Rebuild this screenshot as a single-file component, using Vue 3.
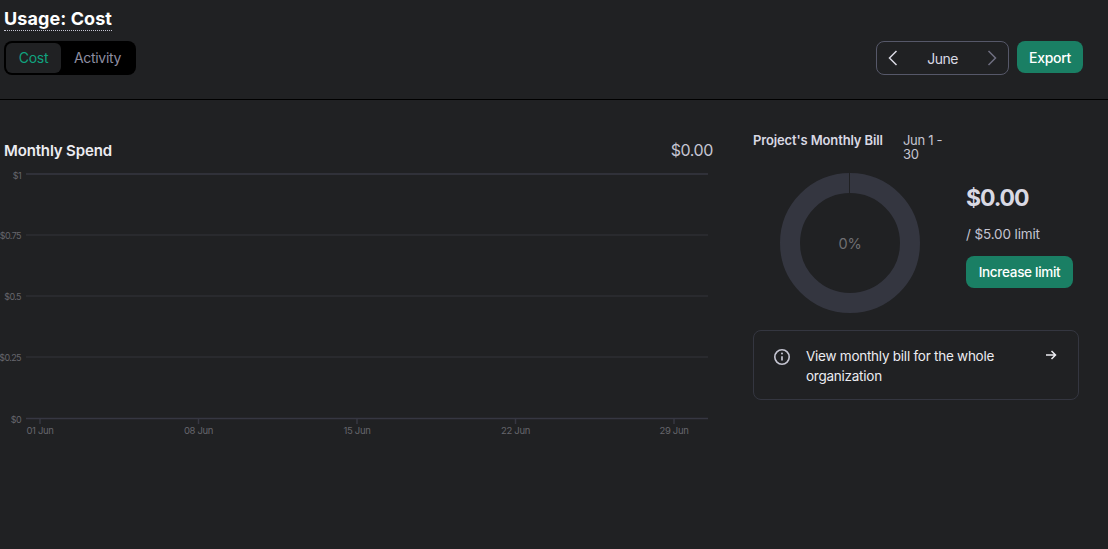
<script setup>
const grid = [
  { y: 174, ly: 179, label: '$1', cls: 'axis' },
  { y: 235, ly: 239, label: '$0.75', cls: 'mid' },
  { y: 296, ly: 300, label: '$0.5', cls: 'mid' },
  { y: 357, ly: 361, label: '$0.25', cls: 'mid' },
  { y: 418.5, ly: 423, label: '$0', cls: 'axis' },
]
const ticks = [
  { x: 40, label: '01 Jun' },
  { x: 198.5, label: '08 Jun' },
  { x: 357, label: '15 Jun' },
  { x: 515.5, label: '22 Jun' },
  { x: 674, label: '29 Jun' },
]
</script>

<template>
  <div class="page">
    <header class="top">
      <h1 class="title"><span class="title-text">Usage: Cost</span></h1>
      <div class="toolbar">
        <div class="tabs">
          <span class="tab active">Cost</span>
          <span class="tab">Activity</span>
        </div>
        <div class="actions">
          <div class="month">
            <svg class="chev prev" width="12" height="18" viewBox="0 0 12 18" fill="none"><path d="M9.5 2 2.5 9l7 7" /></svg>
            <span class="month-name">June</span>
            <svg class="chev next" width="12" height="18" viewBox="0 0 12 18" fill="none"><path d="M2.5 2l7 7-7 7" /></svg>
          </div>
          <button class="btn export">Export</button>
        </div>
      </div>
    </header>

    <main class="body">
      <section class="spend">
        <div class="spend-head">
          <span class="spend-title">Monthly Spend</span>
          <span class="spend-total">$0.00</span>
        </div>
        <svg class="chart" width="720" height="280" viewBox="0 160 720 280">
          <g v-for="g in grid" :key="g.label">
            <line x1="26" x2="708" :y1="g.y" :y2="g.y" :class="g.cls" />
            <text x="21" :y="g.ly" text-anchor="end" class="tick-text y-text">{{ g.label }}</text>
          </g>
          <g v-for="t in ticks" :key="t.label">
            <line :x1="t.x" :x2="t.x" y1="419" y2="424" class="axis" />
            <text :x="t.x" y="434" text-anchor="middle" class="tick-text">{{ t.label }}</text>
          </g>
        </svg>
      </section>

      <aside class="bill">
        <div class="bill-head">
          <span class="bill-title">Project's Monthly Bill</span>
          <span class="bill-range">Jun 1 -<br />30</span>
        </div>
        <div class="bill-main">
          <div class="donut">
            <svg width="140" height="140" viewBox="0 0 140 140">
              <circle cx="70" cy="70" r="60" fill="none" stroke="#343640" stroke-width="20" />
              <line x1="69.5" x2="69.5" y1="0" y2="20" stroke="#202123" stroke-width="1" />
            </svg>
            <span class="pct">0%</span>
          </div>
          <div class="stats">
            <div class="amount">$0.00</div>
            <div class="limit">/ $5.00 limit</div>
            <button class="btn increase">Increase limit</button>
          </div>
        </div>
        <div class="org-card">
          <svg class="info" width="18" height="18" viewBox="0 0 18 18" fill="none">
            <circle cx="9" cy="9" r="7.2" stroke="#c5c5d2" stroke-width="1.6" />
            <path d="M9 8.2v4.3" stroke="#c5c5d2" stroke-width="1.7" />
            <circle cx="9" cy="5.6" r="1" fill="#c5c5d2" />
          </svg>
          <span class="org-text">View monthly bill for the whole organization</span>
          <svg class="arrow" width="12" height="12" viewBox="0 0 12 12" fill="none">
            <path d="M1 6h9.5M6.5 2l4 4-4 4" stroke="#ececf1" stroke-width="1.5" />
          </svg>
        </div>
      </aside>
    </main>
  </div>
</template>

<style scoped>
.page {
  width: 1108px;
  height: 549px;
  overflow: hidden;
  background: #202123;
  color: #ececf1;
  font-family: Inter, "Liberation Sans", sans-serif;
}
.top {
  height: 92px;
  padding: 7px 25px 0 4px;
  border-bottom: 1px solid #000;
}
.title {
  margin: 0;
  height: 24px;
  font-size: 18px;
  line-height: 23px;
  font-weight: 700;
  letter-spacing: 0.08px;
  color: #fff;
}
.title-text {
  display: inline-block;
  height: 23px;
  border-bottom: 1px dotted #c5c5d2;
}
.toolbar {
  display: flex;
  justify-content: space-between;
  align-items: flex-start;
  margin-top: 10px;
}
.tabs {
  display: flex;
  width: 132px;
  height: 34px;
  padding: 2px;
  box-sizing: border-box;
  background: #000;
  border-radius: 8px;
}
.tab {
  display: flex;
  align-items: center;
  justify-content: center;
  padding-bottom: 2px;
  box-sizing: border-box;
  font-size: 14px;
  letter-spacing: -0.3px;
  color: #8e8ea0;
  border-radius: 6px;
}
.tab.active {
  flex: 0 0 55px;
  background: #202123;
  color: #10a37f;
}
.tab:last-child {
  flex: 0 0 73px;
}
.actions {
  display: flex;
  align-items: flex-start;
  gap: 8px;
}
.month {
  display: flex;
  align-items: center;
  justify-content: space-between;
  width: 133px;
  height: 34px;
  padding: 0 10px;
  box-sizing: border-box;
  border: 1px solid #565869;
  border-radius: 8px;
}
.chev path {
  stroke-width: 1.5;
}
.prev path {
  stroke: #d9d9e3;
}
.next path {
  stroke: #6e6e80;
}
.month-name {
  font-size: 14px;
  letter-spacing: -0.5px;
  color: #d9d9e3;
}
.btn {
  border: 0;
  padding: 0;
  height: 32px;
  background: #1a7f64;
  color: #fff;
  border-radius: 8px;
  font-family: inherit;
  font-size: 14px;
  font-weight: 500;
  letter-spacing: -0.3px;
}
.export {
  width: 66px;
}
.body {
  display: flex;
  align-items: flex-start;
}
.spend {
  flex: 0 0 720px;
  padding-top: 40px;
}
.spend-head {
  display: flex;
  justify-content: space-between;
  align-items: center;
  height: 20px;
  padding: 0 7px 0 4px;
}
.spend-title {
  font-size: 15px;
  font-weight: 600;
  letter-spacing: -0.15px;
  color: #ececf1;
}
.spend-total {
  font-size: 16px;
  letter-spacing: -0.4px;
  color: #c5c5d2;
}
.chart {
  display: block;
}
.chart line {
  stroke-width: 1.5;
}
.axis {
  stroke: #363742;
}
.mid {
  stroke: #2d2e33;
}
.tick-text {
  font-size: 9.5px;
  letter-spacing: -0.35px;
  fill: #66666c;
}
.y-text {
  font-size: 9px;
  letter-spacing: -0.6px;
}
.bill {
  flex: 0 0 326px;
  margin-left: 33px;
  padding-top: 33px;
}
.bill-head {
  display: flex;
  align-items: flex-start;
  height: 40px;
  font-size: 13px;
  line-height: 14px;
  letter-spacing: -0.3px;
}
.bill-title {
  width: 150px;
  font-weight: 600;
  letter-spacing: -0.13px;
  color: #d9d9e3;
}
.bill-range {
  color: #c5c5d2;
}
.bill-main {
  display: flex;
  align-items: flex-start;
  height: 140px;
  padding-left: 27px;
}
.donut {
  position: relative;
  width: 140px;
  height: 140px;
}
.donut svg {
  display: block;
}
.pct {
  position: absolute;
  inset: 0;
  display: flex;
  align-items: center;
  justify-content: center;
  font-size: 14.5px;
  letter-spacing: -0.3px;
  color: #6f6f72;
}
.stats {
  margin-left: 46px;
  padding-top: 11px;
}
.amount {
  font-size: 23px;
  line-height: 28px;
  font-weight: 700;
  letter-spacing: -1.1px;
  color: #d9d9e3;
}
.limit {
  margin-top: 12px;
  font-size: 13.5px;
  line-height: 20px;
  letter-spacing: -0.13px;
  color: #c5c5d2;
}
.increase {
  display: block;
  width: 107px;
  margin-top: 12px;
  font-size: 13.5px;
}
.org-card {
  display: flex;
  align-items: flex-start;
  width: 326px;
  height: 70px;
  margin-top: 17px;
  padding: 15px 21px 0 20px;
  box-sizing: border-box;
  border: 1px solid #343640;
  border-radius: 8px;
}
.info {
  flex: none;
  margin-top: 2px;
  margin-left: -1px;
}
.org-text {
  flex: 1;
  margin-left: 15px;
  font-size: 13.5px;
  line-height: 20px;
  letter-spacing: -0.25px;
  color: #ececf1;
}
.arrow {
  flex: none;
  margin-top: 3px;
}
</style>
